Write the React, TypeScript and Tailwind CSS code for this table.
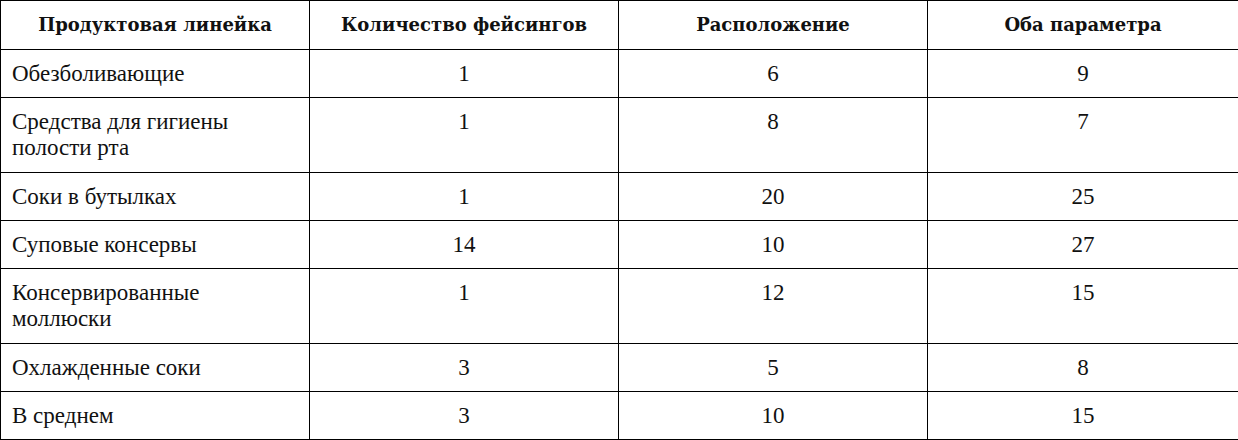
const headers = ['Продуктовая линейка', 'Количество фейсингов', 'Расположение', 'Оба параметра'];

const rows: { name: string[]; vals: string[]; h: string }[] = [
  { name: ['Обезболивающие'], vals: ['1', '6', '9'], h: 'h-[48px]' },
  { name: ['Средства для гигиены', 'полости рта'], vals: ['1', '8', '7'], h: 'h-[75px]' },
  { name: ['Соки в бутылках'], vals: ['1', '20', '25'], h: 'h-[48px]' },
  { name: ['Суповые консервы'], vals: ['14', '10', '27'], h: 'h-[48px]' },
  { name: ['Консервированные', 'моллюски'], vals: ['1', '12', '15'], h: 'h-[75px]' },
  { name: ['Охлажденные соки'], vals: ['3', '5', '8'], h: 'h-[48px]' },
  { name: ['В среднем'], vals: ['3', '10', '15'], h: 'h-[48px]' },
];

export default function App() {
  return (
    <div className="w-[1238px] h-[440px] bg-white text-[#111] font-['Liberation_Serif',serif]">
      <table className="w-[1238px] table-fixed border-collapse">
        <colgroup>
          <col className="w-[309px]" />
          <col className="w-[309px]" />
          <col className="w-[309px]" />
          <col className="w-[311px]" />
        </colgroup>
        <thead>
          <tr className="h-[49px]">
            {headers.map((t) => (
              <th key={t} className="border border-black text-center align-middle font-['DejaVu_Serif',serif] text-[18px] font-bold leading-[24px] p-0">
                {t}
              </th>
            ))}
          </tr>
        </thead>
        <tbody>
          {rows.map((r) => (
            <tr key={r.name[0]} className={r.h}>
              <td className="border border-black align-top pl-[11px] pt-[11px] text-[23px] leading-[26px]">
                {r.name.map((l) => (
                  <div key={l}>{l}</div>
                ))}
              </td>
              {r.vals.map((v, i) => (
                <td key={i} className="border border-black align-top text-center pt-[11px] text-[23px] leading-[26px]">
                  {v}
                </td>
              ))}
            </tr>
          ))}
        </tbody>
      </table>
    </div>
  );
}
